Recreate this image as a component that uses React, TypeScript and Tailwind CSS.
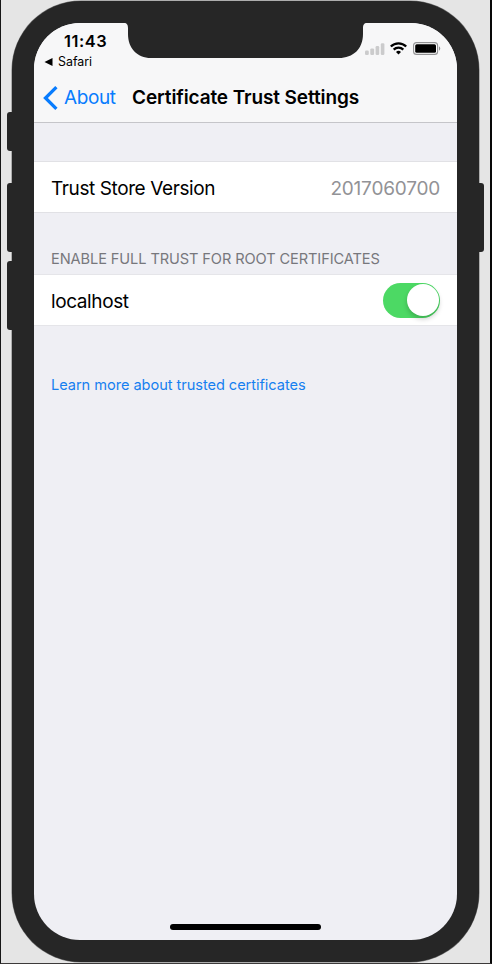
import { useState } from "react";

function Notch() {
  return (
    <svg className="absolute left-[90px] top-[-1px]" width="243" height="37" viewBox="0 0 243 37">
      <path
        d="M0 0H243V1C240 1 239 3 239 6V12C239 27 229 36 215 36H27C13 36 4 26 4 12V6C4 3 3 1 0 1Z"
        fill="#262626"
      />
    </svg>
  );
}

function SignalBars() {
  return (
    <svg width="20" height="12" viewBox="0 0 20 12" fill="#cbcbcc">
      <rect x="0" y="7.5" width="3.8" height="4.5" rx="1.2" />
      <rect x="5.3" y="5.4" width="3.8" height="6.6" rx="1.2" />
      <rect x="10.6" y="3" width="3.6" height="9" rx="1.2" />
      <rect x="15.8" y="0.2" width="3.6" height="11.8" rx="1.2" />
    </svg>
  );
}

function Wifi() {
  return (
    <svg width="17" height="13" viewBox="0 0 17 13" fill="none" stroke="#000" strokeWidth="2.3">
      <path d="M0.8 4.5A10.9 10.9 0 0 1 16.2 4.5" />
      <path d="M3.7 7.6A6.8 6.8 0 0 1 13.3 7.6" />
      <path d="M6 10A3.7 3.7 0 0 1 11 10L8.5 12.6Z" fill="#000" stroke="none" />
    </svg>
  );
}

function Battery() {
  return (
    <svg width="28" height="13" viewBox="0 0 28 13">
      <rect x="0.6" y="0.6" width="24" height="11.8" rx="3" fill="#fff" stroke="#929294" strokeWidth="1.1" />
      <rect x="2.2" y="2.2" width="20.8" height="8.6" rx="1.5" fill="#000" />
      <path d="M26 4.3C27.7 5 27.7 8 26 8.7Z" fill="#929294" />
    </svg>
  );
}

function StatusBar() {
  return (
    <div className="flex h-[51px] justify-between">
      <div className="flex flex-col pl-[10px]">
        <span className="ml-5 mt-2 text-[16.4px] font-semibold leading-5 tracking-[0.55px]">11:43</span>
        <span className="mt-px flex items-center gap-[5px] text-[12.4px] leading-5">
          <svg width="9" height="8" viewBox="0 0 9 8">
            <path d="M0.5 4L8.5 0V8Z" />
          </svg>
          Safari
        </span>
      </div>
      <div className="mr-4 mt-[19px] flex h-[13px] items-center gap-[5px]">
        <SignalBars />
        <Wifi />
        <span className="ml-px flex">
          <Battery />
        </span>
      </div>
    </div>
  );
}

function NavBar() {
  return (
    <div className="flex h-12 items-center pl-[9px]">
      <button className="flex items-center text-[#087cfe]">
        <svg width="15" height="24" viewBox="0 0 15 24" fill="none" stroke="currentColor" strokeWidth="3.3">
          <path d="M13.4 1.2L2.5 12L13.4 22.8" />
        </svg>
        <span className="ml-[6px] w-[68px] whitespace-nowrap text-left text-[19px] tracking-[-0.4px]">About</span>
      </button>
      <h1 className="whitespace-nowrap text-[19px] font-semibold tracking-[-0.11px]">Certificate Trust Settings</h1>
    </div>
  );
}

function Toggle() {
  const [on, setOn] = useState(true);
  return (
    <button
      role="switch"
      aria-checked={on}
      onClick={() => setOn(!on)}
      className={`flex h-[35px] w-[57px] items-center rounded-full px-[1.5px] ${on ? "justify-end bg-[#4cd964]" : "justify-start bg-[#e5e5ea]"}`}
    >
      <span className="size-8 rounded-full bg-white shadow-[0_3px_5px_rgba(0,0,0,0.2)]" />
    </button>
  );
}

export default function App() {
  return (
    <div className="h-[964px] w-[492px] overflow-hidden border-b border-l border-r-2 border-b-[#3c3a3a] border-l-[#161616] border-r-[#080808] bg-[#e5e5e5] font-['Inter','Liberation_Sans',sans-serif] text-black">
      <div className="relative ml-[11px] mt-px h-[961px] w-[467px] rounded-[69px] bg-[#262626] px-[22px] pt-[22px] shadow-[0_0_0_0.5px_#777]">
        <span className="absolute left-[-5px] top-[111px] h-[39px] w-[6px] rounded-l-[3px] bg-[#262626]" />
        <span className="absolute left-[-5px] top-[182px] h-[69px] w-[6px] rounded-l-[3px] bg-[#262626]" />
        <span className="absolute left-[-5px] top-[260px] h-[69px] w-[6px] rounded-l-[3px] bg-[#262626]" />
        <span className="absolute right-[-5px] top-[182px] h-[69px] w-[6px] rounded-r-[3px] bg-[#262626]" />
        <div className="relative flex h-[917px] w-[423px] flex-col rounded-[46px] bg-[#efeff4]">
          <header className="h-[100px] rounded-t-[46px] border-b border-[#c5c5c9] bg-[#f7f7f8]">
            <StatusBar />
            <NavBar />
          </header>
          <section className="mt-[38px] flex h-[52px] items-center justify-between border-y border-[#e1e1e5] bg-white px-[17px] pt-[4px] text-[19px]">
            <span className="tracking-[-0.4px]">Trust Store Version</span>
            <span className="tracking-[-0.2px] text-[#929296]">2017060700</span>
          </section>
          <h2 className="mt-[36px] whitespace-nowrap pl-[17px] text-[14.6px] leading-5 tracking-[-0.1px] text-[#77777c]">
            ENABLE FULL TRUST FOR ROOT CERTIFICATES
          </h2>
          <section className="mt-[5px] flex h-[52px] items-center justify-between border-y border-[#e5e5e9] bg-white px-[17px] text-[19px]">
            <span className="pt-[4px] tracking-[-0.4px]">localhost</span>
            <Toggle />
          </section>
          <a className="mt-[49px] whitespace-nowrap pl-[17px] text-[14.6px] leading-5 tracking-[-0.05px] text-[#167ff0]">
            Learn more about trusted certificates
          </a>
          <div className="mb-[10px] ml-[136px] mt-auto h-[6px] w-[151px] rounded-full bg-black" />
          <Notch />
        </div>
      </div>
    </div>
  );
}
